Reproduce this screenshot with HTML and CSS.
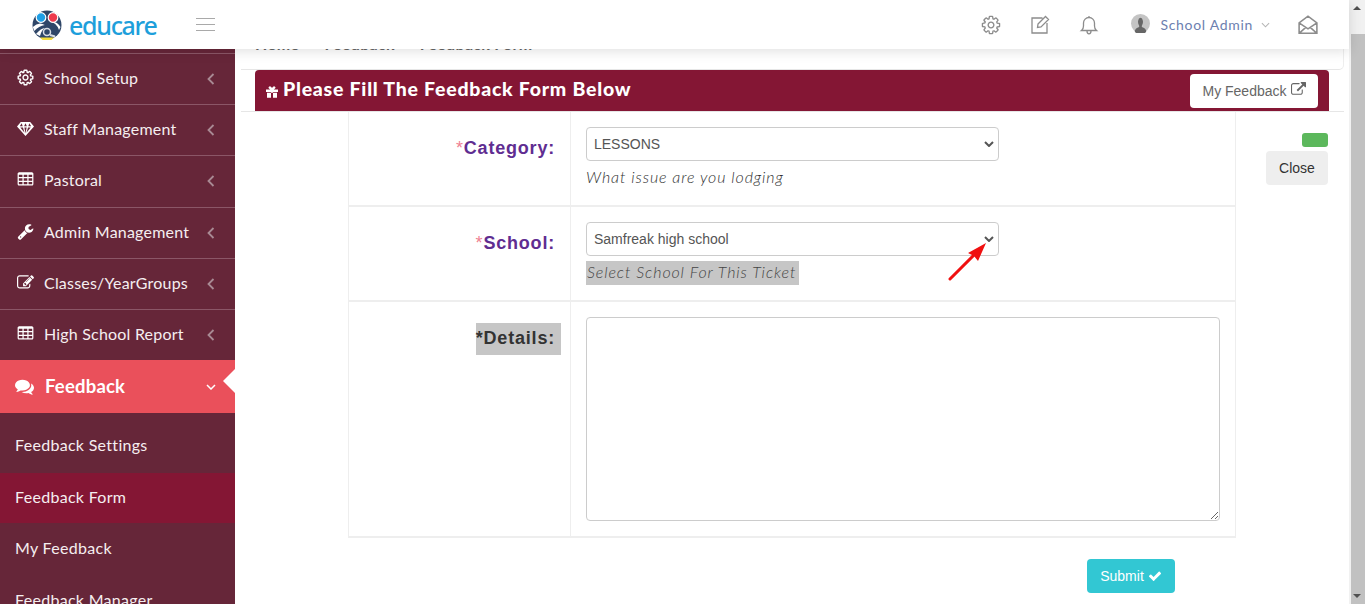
FILE: index.html
```html
<!DOCTYPE html>
<html lang="en">
<head>
    <meta charset="UTF-8">
    <title>Feedback Form</title>
    <link rel="stylesheet" href="styles.css">
</head>
<body>
    <svg class="sprite" xmlns="http://www.w3.org/2000/svg">
        <symbol id="i-cog" viewBox="0 0 1792 1792"><path d="M1152 896q0-106-75-181t-181-75-181 75-75 181 75 181 181 75 181-75 75-181zm512-109v222q0 12-8 23t-20 13l-185 28q-19 54-39 91 35 50 107 138 10 12 10 25t-9 23q-27 37-99 108t-94 71q-12 0-26-9l-138-108q-44 23-91 38-16 136-29 186-7 28-36 28h-222q-14 0-24.5-8.5t-11.5-21.5l-28-184q-49-16-90-37l-141 107q-10 9-25 9-14 0-25-11-126-114-165-168-7-10-7-23 0-12 8-23 15-21 51-66.5t54-70.5q-27-50-41-99l-183-27q-13-2-21-12.5t-8-23.5v-222q0-12 8-23t19-13l186-28q14-46 39-92-40-57-107-138-10-12-10-24 0-10 9-23 26-36 98.5-107.5t94.5-71.5q13 0 26 10l138 107q44-23 91-38 16-136 29-186 7-28 36-28h222q14 0 24.5 8.5t11.5 21.5l28 184q49 16 90 37l142-107q9-9 24-9 13 0 25 10 129 119 165 170 7 8 7 22 0 12-8 23-15 21-51 66.5t-54 70.5q26 50 41 98l183 28q13 2 21 12.5t8 23.5z"/></symbol>
        <symbol id="i-table" viewBox="0 0 1792 1792"><path d="M576 1376v-192q0-14-9-23t-23-9h-320q-14 0-23 9t-9 23v192q0 14 9 23t23 9h320q14 0 23-9t9-23zm0-384v-192q0-14-9-23t-23-9h-320q-14 0-23 9t-9 23v192q0 14 9 23t23 9h320q14 0 23-9t9-23zm512 384v-192q0-14-9-23t-23-9h-320q-14 0-23 9t-9 23v192q0 14 9 23t23 9h320q14 0 23-9t9-23zm-512-768v-192q0-14-9-23t-23-9h-320q-14 0-23 9t-9 23v192q0 14 9 23t23 9h320q14 0 23-9t9-23zm512 384v-192q0-14-9-23t-23-9h-320q-14 0-23 9t-9 23v192q0 14 9 23t23 9h320q14 0 23-9t9-23zm512 384v-192q0-14-9-23t-23-9h-320q-14 0-23 9t-9 23v192q0 14 9 23t23 9h320q14 0 23-9t9-23zm-512-768v-192q0-14-9-23t-23-9h-320q-14 0-23 9t-9 23v192q0 14 9 23t23 9h320q14 0 23-9t9-23zm512 384v-192q0-14-9-23t-23-9h-320q-14 0-23 9t-9 23v192q0 14 9 23t23 9h320q14 0 23-9t9-23zm0-384v-192q0-14-9-23t-23-9h-320q-14 0-23 9t-9 23v192q0 14 9 23t23 9h320q14 0 23-9t9-23zm128-320v1088q0 66-47 113t-113 47h-1344q-66 0-113-47t-47-113v-1088q0-66 47-113t113-47h1344q66 0 113 47t47 113z"/></symbol>
        <symbol id="i-wrench" viewBox="0 0 1792 1792"><path d="M448 1472q0-26-19-45t-45-19-45 19-19 45 19 45 45 19 45-19 19-45zm644-420l-682 682q-37 37-90 37-52 0-91-37l-106-108q-38-36-38-90 0-53 38-91l681-681q39 98 114.5 173.5t173.5 114.5zm634-435q0 39-23 106-47 134-164.5 217.5t-258.5 83.5q-185 0-316.5-131.5t-131.5-316.5 131.5-316.5 316.5-131.5q58 0 121.5 16.5t107.5 46.5q16 11 16 28t-16 28l-293 169v224l193 107q5-3 79-48.5t135.5-81 70.5-35.5q15 0 23.5 10t8.5 25z"/></symbol>
        <symbol id="i-edit" viewBox="0 0 1792 1792"><path d="M888 1184l116-116-152-152-116 116v56h96v96h56zm440-720q-16-16-33 1l-350 350q-17 17-1 33t33-1l350-350q17-17 1-33zm80 594v190q0 119-84.5 203.5t-203.5 84.5h-832q-119 0-203.5-84.5t-84.5-203.5v-832q0-119 84.5-203.5t203.5-84.5h832q63 0 117 25 15 7 18 23 3 17-9 29l-49 49q-14 14-32 8-23-6-45-6h-832q-66 0-113 47t-47 113v832q0 66 47 113t113 47h832q66 0 113-47t47-113v-126q0-13 9-22l64-64q15-15 35-7t20 29zm-96-738l288 288-672 672h-288v-288zm444 132l-92 92-288-288 92-92q28-28 68-28t68 28l152 152q28 28 28 68t-28 68z"/></symbol>
        <symbol id="i-comments" viewBox="0 0 1792 1792"><path d="M1408 768q0 139-94 257t-256.5 186.5-353.5 68.5q-86 0-176-16-124 88-278 128-36 9-86 16h-3q-11 0-20.5-8t-11.5-21q-1-3-1-6.5t.5-6.5 2-6l2.5-5 3.5-5.5 4-5 4.5-5 4-4.5q5-6 23-25t26-29.5 22.5-29 25-38.5 20.5-44q-124-72-195-177t-71-224q0-139 94-257t256.5-186.5 353.5-68.5 353.5 68.5 256.5 186.5 94 257zm384 256q0 120-71 224.5t-195 176.5q10 24 20.5 44t25 38.5 22.5 29 26 29.5 23 25q1 1 4 4.5t4.5 5 4 5 3.5 5.5l2.5 5 2 6 .5 6.5-1 6.5q-3 14-13 22t-22 7q-50-7-86-16-154-40-278-128-90 16-176 16-271 0-472-132 58 4 88 4 161 0 309-45t264-129q125-92 192-212t67-254q0-77-23-152 129 71 204 178t75 230z"/></symbol>
        <symbol id="i-external" viewBox="0 0 1792 1792"><path d="M1408 928v320q0 119-84.5 203.5t-203.5 84.5h-832q-119 0-203.5-84.5t-84.5-203.5v-832q0-119 84.5-203.5t203.5-84.5h704q14 0 23 9t9 23v64q0 14-9 23t-23 9h-704q-66 0-113 47t-47 113v832q0 66 47 113t113 47h832q66 0 113-47t47-113v-320q0-14 9-23t23-9h64q14 0 23 9t9 23zm384-864v512q0 26-19 45t-45 19-45-19l-176-176-652 652q-10 10-23 10t-23-10l-114-114q-10-10-10-23t10-23l652-652-176-176q-19-19-19-45t19-45 45-19h512q26 0 45 19t19 45z"/></symbol>
        <symbol id="i-check" viewBox="0 0 1792 1792"><path d="M1671 566q0 40-28 68l-724 724-136 136q-28 28-68 28t-68-28l-136-136-362-362q-28-28-28-68t28-68l136-136q28-28 68-28t68 28l294 295 656-657q28-28 68-28t68 28l136 136q28 28 28 68z"/></symbol>
        <symbol id="i-left" viewBox="0 0 10 14"><path d="M7.5 2 2.5 7l5 5"/></symbol>
    </svg>

    <div class="page">
        <div class="main">
            <header class="topbar">
                <div class="brand">
                    <svg class="brand-mark" viewBox="0 0 30 30">
                        <circle cx="15" cy="15" r="14.5" fill="#2f4668"/>
                        <path d="M8 27.500h14l-2.500 2.500h-9z" fill="#f4dc3a"/>
                        <path d="M.8 17q6-6 12-2-6 1-10.500 6zM4 24q5-6 9-6-3.500 2-5 8zM18 12q6 0 9 8l1.500-3Q25 11 18 12z" fill="#fff"/>
                        <circle cx="9" cy="7.500" r="4.800" fill="#1e9fe6" stroke="#fff" stroke-width="1.200"/>
                        <circle cx="21" cy="7.500" r="4.800" fill="#ee3a4d" stroke="#fff" stroke-width="1.200"/>
                        <circle cx="15" cy="22" r="3.500" fill="none" stroke="#d8dde4" stroke-width="1.500"/>
                        <path d="M18 25l5 1.500" stroke="#d8dde4" stroke-width="2"/>
                    </svg>
                    <span class="brand-name">educare</span>
                </div>
                <div class="burger"><span></span><span></span><span></span></div>
                <nav class="top-icons">
                    <svg class="top-icon outline"><use href="#i-cog"/></svg>
                    <svg class="top-icon edit-icon" viewBox="0 0 20 20"><path d="M12.500 3H2v15h15V8M8 9 15.500 1.500l3 3L11 12l-3.500.5z"/></svg>
                    <svg class="top-icon bell" viewBox="0 0 18 20"><path d="M1.500 15.500q2-1.500 2-4.500V8a5.500 5.500 0 0 1 11 0v3q0 3 2 4.500zM7 16q0 2.800 2 2.800t2-2.800M9 2.500V1"/></svg>
                    <div class="user">
                        <svg class="avatar" viewBox="0 0 20 20">
                            <circle cx="10" cy="10" r="10" fill="#c4c4c4"/>
                            <path d="M4 19q0-4 4-5 1-.5.500-2-1.500-2-1-5 .5-3 2.500-3t2.500 3q.5 3-1 5-.5 1.500.5 2 4 1 4 5a10 10 0 0 1-12 0z" fill="#666"/>
                        </svg>
                        <span class="user-name">School Admin</span>
                        <svg class="user-caret" viewBox="0 0 10 6"><path d="M1 1l4 4 4-4"/></svg>
                    </div>
                    <svg class="top-icon mail" viewBox="1 0 18 18"><path d="M2 7 10 1l8 6v9.500H2zM2 7l8 5.500L18 7M2 16.500l6-5.300M18 16.500l-6-5.300"/></svg>
                </nav>
            </header>

            <div class="workspace">
                <aside class="sidebar">
                    <a class="nav-item"><svg class="nav-icon outline"><use href="#i-cog"/></svg><span class="nav-label">School Setup</span><svg class="nav-arrow"><use href="#i-left"/></svg></a>
                    <a class="nav-item">
                        <svg class="nav-icon" viewBox="0 0 18 16"><path d="M4 1h10l4 5-9 10L0 6zM5 2.500 3 5.500h3zM9 2.500 7.500 5.500h3zM13 2.500 12 5.500h3zM3.500 7 8 12.500 6.300 7zM7.800 7 9 13l1.200-6zM11.700 7 10 12.500 14.500 7z" fill-rule="evenodd"/></svg>
                        <span class="nav-label">Staff Management</span><svg class="nav-arrow"><use href="#i-left"/></svg>
                    </a>
                    <a class="nav-item"><svg class="nav-icon"><use href="#i-table"/></svg><span class="nav-label">Pastoral</span><svg class="nav-arrow"><use href="#i-left"/></svg></a>
                    <a class="nav-item"><svg class="nav-icon"><use href="#i-wrench"/></svg><span class="nav-label">Admin Management</span><svg class="nav-arrow"><use href="#i-left"/></svg></a>
                    <a class="nav-item"><svg class="nav-icon"><use href="#i-edit"/></svg><span class="nav-label">Classes/YearGroups</span><svg class="nav-arrow"><use href="#i-left"/></svg></a>
                    <a class="nav-item"><svg class="nav-icon"><use href="#i-table"/></svg><span class="nav-label">High School Report</span><svg class="nav-arrow"><use href="#i-left"/></svg></a>
                    <a class="nav-item nav-active">
                        <svg class="nav-icon"><use href="#i-comments"/></svg>
                        <span class="nav-label">Feedback</span>
                        <svg class="nav-down" viewBox="0 0 10 6"><path d="M1 1l4 4 4-4"/></svg>
                    </a>
                    <a class="sub-item sub-first">Feedback Settings</a>
                    <a class="sub-item sub-current">Feedback Form</a>
                    <a class="sub-item sub-plain">My Feedback</a>
                    <a class="sub-item">Feedback Manager</a>
                </aside>

                <main class="content">
                    <div class="crumbs"><span>Home</span><span>Feedback</span><span>Feedback Form</span></div>
                    <div class="panel-head">
                        <h2>
                            <svg class="gift" viewBox="0 0 12 12"><path d="M0 3.500h4.200L3 2.500Q2 1.500 3 .7t2.200.3L6 2l.8-1Q8 -.1 9 .7t0 1.800l-1.200 1H12v2.500H0zM1 6.700h4v5H1zM7 6.700h4v5H7zM5 3.500h2V6.700H5z"/></svg>
                            Please Fill The Feedback Form Below
                        </h2>
                        <a class="my-feedback">My Feedback <svg class="ext-icon"><use href="#i-external"/></svg></a>
                    </div>

                    <div class="form-area">
                        <form class="feedback-form">
                            <div class="form-row row-category">
                                <div class="label-cell"><label class="field-label"><span class="star">*</span>Category:</label></div>
                                <div class="input-cell">
                                    <select class="field"><option>LESSONS</option></select>
                                    <p class="help">What issue are you lodging</p>
                                </div>
                            </div>
                            <div class="form-row row-school">
                                <div class="label-cell"><label class="field-label"><span class="star">*</span>School:</label></div>
                                <div class="input-cell">
                                    <select class="field"><option>Samfreak high school</option></select>
                                    <p class="help help-marked"><span>Select School For This Ticket</span></p>
                                    <svg class="arrow-note" viewBox="0 0 40 40"><path d="M2 38 31 9" stroke="#f01010" stroke-width="3" stroke-linecap="round"/><path d="M38 2 30 20 26 15 20 12z" fill="#f01010"/></svg>
                                </div>
                            </div>
                            <div class="form-row row-details">
                                <div class="label-cell"><label class="field-label label-marked">*Details:</label></div>
                                <div class="input-cell"><textarea class="details-box"></textarea></div>
                            </div>
                            <div class="form-actions">
                                <button type="button" class="submit">Submit <svg class="check"><use href="#i-check"/></svg></button>
                            </div>
                        </form>
                        <div class="side-actions">
                            <span class="green-chip"></span>
                            <button type="button" class="close">Close</button>
                        </div>
                    </div>
                </main>
            </div>
        </div>
        <div class="scrollbar">
            <div class="scroll-up"></div>
            <div class="scroll-thumb"></div>
            <div class="scroll-down"></div>
        </div>
    </div>
</body>
</html>
```
FILE: styles.css
```css
* {
    box-sizing: border-box;
}
html, body {
    margin: 0;
    height: 604px;
    overflow: hidden;
}
body {
    font-family: "Lato", "Liberation Sans", sans-serif;
    background: #fff;
    color: #333;
}
.sprite {
    display: none;
}
.page {
    display: flex;
    height: 604px;
}
.main {
    flex: 1;
    min-width: 0;
    position: relative;
}

/* top bar */
.topbar {
    position: absolute;
    top: 0;
    left: 0;
    right: 0;
    height: 49px;
    background: #fff;
    box-shadow: 0 2px 12px rgba(0,0,0,0.13);
    z-index: 5;
    display: flex;
    align-items: center;
}
.brand {
    width: 196px;
    padding-left: 32px;
    display: flex;
    align-items: center;
    gap: 7px;
    margin-top: 3px;
    margin-bottom: 3px;
}
.brand-mark {
    width: 30px;
    height: 30px;
    flex: none;
}
.brand-name {
    font-family: "Noto Sans", sans-serif;
    font-size: 25px;
    font-weight: 500;
    line-height: 30px;
    letter-spacing: -1.3px;
    color: #1e9fdb;
}
.burger {
    width: 19px;
    display: flex;
    flex-direction: column;
    gap: 5px;
}
.burger span {
    height: 1px;
    background: #a9a9a9;
}
.top-icons {
    margin-left: auto;
    display: flex;
    align-items: center;
    padding-right: 31px;
    padding-left: 1px;
}
.top-icon {
    width: 20px;
    height: 20px;
    fill: #8c8c8c;
}
.outline {
    fill: none;
    stroke: #8c8c8c;
    stroke-width: 120px;
}
.edit-icon {
    margin-left: 29px;
    fill: none;
    stroke: #8c8c8c;
    stroke-width: 1.3;
}
.bell {
    margin-left: 29px;
    fill: none;
    stroke: #8c8c8c;
    stroke-width: 1.3;
}
.user {
    display: flex;
    align-items: center;
    margin-left: 32px;
}
.avatar {
    width: 19px;
    height: 19px;
    margin-top: -2px;
}
.user-name {
    margin-left: 10px;
    font-size: 14px;
    letter-spacing: 0.7px;
    color: #6c80b0;
    margin-top: -1px;
}
.user-caret {
    width: 9px;
    height: 6px;
    margin-left: 8px;
    fill: none;
    stroke: #b5b5b5;
    stroke-width: 1.2;
}
.mail {
    margin-left: 28px;
    fill: none;
    stroke: #8c8c8c;
    stroke-width: 1.4;
}

/* sidebar */
.workspace {
    display: flex;
    height: 604px;
}
.sidebar {
    width: 235px;
    flex: none;
    background: #662639;
    padding-top: 52.8px;
    overflow: hidden;
    color: #fff;
}
.nav-item {
    display: flex;
    align-items: center;
    height: 51.25px;
    padding-left: 17px;
    border-top: 1px solid #8b5667;
    font-size: 16px;
    letter-spacing: 0.2px;
    color: #f5eef0;
}
.nav-icon {
    width: 17px;
    height: 17px;
    fill: #fff;
    flex: none;
    margin-right: 10px;
    margin-top: -3px;
}
.nav-icon.outline {
    stroke: #fff;
    stroke-width: 150px;
    fill: none;
}
.nav-label {
    flex: 1;
    margin-top: -3px;
}
.nav-arrow {
    width: 10px;
    height: 14px;
    margin-right: 19px;
    fill: none;
    stroke: #a98a94;
    stroke-width: 1.800;
}
.nav-active {
    height: 53px;
    border-top: 0;
    background: #ea505b;
    padding-left: 15px;
    font-size: 18.5px;
    font-weight: 700;
    color: #fff;
    position: relative;
}
.nav-active .nav-icon {
    width: 19px;
    height: 19px;
    margin-right: 11px;
    margin-top: -1px;
}
.nav-active .nav-label {
    margin-top: -1px;
}
.nav-active::after {
    content: "";
    position: absolute;
    right: 0;
    top: 9px;
    border: 12px solid transparent;
    border-right-color: #fff;
    border-left-width: 0;
}
.nav-down {
    width: 10px;
    height: 6px;
    margin-right: 19px;
    fill: none;
    stroke: #fff;
    stroke-width: 1.500;
}
.sub-item {
    display: flex;
    align-items: center;
    height: 51px;
    padding-left: 15px;
    font-size: 16px;
    letter-spacing: 0.3px;
    color: #f5eef0;
}
.sub-first {
    height: 59.7px;
    padding-top: 2px;
}
.sub-current {
    height: 50px;
    padding-bottom: 3px;
    background: #841634;
}
.sub-plain {
    padding-bottom: 1px;
}

/* content */
.content {
    flex: 1;
    min-width: 0;
    padding-top: 32px;
}
.crumbs {
    display: flex;
    gap: 25px;
    height: 38px;
    margin-left: 6px;
    margin-right: 5px;
    padding-left: 14px;
    padding-top: 2px;
    font-size: 16px;
    font-weight: 700;
    letter-spacing: 0.3px;
    color: #666;
    border-bottom: 1px solid #e6e6e6;
    border-right: 1px solid #eee;
    border-radius: 0 0 5px 0;
}
.panel-head {
    display: flex;
    align-items: center;
    justify-content: space-between;
    height: 41px;
    margin-left: 20px;
    margin-right: 20px;
    padding: 0 11px;
    background: #841634;
    border-radius: 4px 4px 0 0;
}
.panel-head h2 {
    margin: -4px 0 0;
    font-size: 19.5px;
    font-weight: 900;
    letter-spacing: 0.75px;
    color: #fff;
    display: flex;
    align-items: center;
    gap: 5px;
}
.gift {
    width: 12px;
    height: 12px;
    fill: #fff;
    margin-top: 6px;
}
.my-feedback {
    background: #fff;
    border-radius: 4px;
    height: 34px;
    width: 128px;
    display: flex;
    align-items: center;
    justify-content: center;
    gap: 4px;
    font-family: "Liberation Sans", sans-serif;
    font-size: 14px;
    color: #666;
}
.ext-icon {
    width: 15px;
    height: 15px;
    fill: #666;
    margin-top: -3px;
}
.form-area {
    display: flex;
    margin-left: 6px;
    margin-right: 5px;
    border-top: 1px solid #e6e6e6;
    padding-left: 107px;
}
.feedback-form {
    width: 888px;
    flex: none;
}
.form-row {
    display: grid;
    grid-template-columns: 222px 1fr;
    border-left: 1px solid #eee;
    border-right: 1px solid #eee;
    border-bottom: 2px solid #eee;
}
.row-category, .row-school {
    height: 95px;
}
.row-details {
    height: 236px;
}
.label-cell {
    border-right: 1px solid #eee;
    text-align: right;
    padding-right: 15px;
    padding-top: 26px;
}
.field-label {
    font-family: "Liberation Sans", sans-serif;
    font-size: 18px;
    font-weight: 700;
    letter-spacing: 0.8px;
    color: #5f2d91;
}
.star {
    color: #ef7f92;
    font-weight: 400;
}
.label-marked {
    display: inline-block;
    height: 32px;
    line-height: 31px;
    margin-top: -6px;
    margin-right: -6px;
    padding-right: 6px;
    background: #c6c6c6;
    color: #333;
}
.input-cell {
    padding: 15px 15px 0;
    position: relative;
}
.field {
    display: block;
    width: 413px;
    height: 34px;
    padding: 0 24px 0 7px;
    border: 1px solid #ccc;
    border-radius: 4px;
    appearance: none;
    background: #fff url("data:image/svg+xml,%3Csvg xmlns='http://www.w3.org/2000/svg' width='10' height='6'%3E%3Cpath d='M1 1l4 4 4-4' fill='none' stroke='%23555' stroke-width='2'/%3E%3C/svg%3E") no-repeat right 4px center;
    font-family: "Liberation Sans", sans-serif;
    font-size: 14px;
    color: #555;
}
.help {
    margin: 5px 0 0;
    height: 24px;
    line-height: 22px;
    font-size: 16px;
    font-weight: 300;
    font-style: italic;
    letter-spacing: 0.9px;
    color: #333;
}
.help-marked span {
    display: inline-block;
    height: 24px;
    padding: 0 3px 0 1px;
    background: #c6c6c6;
    color: #444;
}
.arrow-note {
    position: absolute;
    left: 377px;
    top: 34px;
    width: 40px;
    height: 40px;
    fill: none;
}
.details-box {
    display: block;
    width: 634px;
    height: 204px;
    border: 1px solid #ccc;
    border-radius: 4px;
    background: #fff;
}
.form-actions {
    padding-top: 21px;
    padding-left: 739px;
}
.submit {
    width: 88px;
    height: 34px;
    border: 0;
    border-radius: 4px;
    background: #32c7d3;
    color: #fff;
    font-family: "Liberation Sans", sans-serif;
    font-size: 14px;
    display: flex;
    align-items: center;
    justify-content: center;
    gap: 4px;
    padding: 0;
}
.check {
    width: 14px;
    height: 14px;
    fill: #fff;
}
.side-actions {
    width: 92px;
    padding-top: 21px;
    padding-left: 30px;
    display: flex;
    flex-direction: column;
    align-items: flex-end;
}
.green-chip {
    width: 26px;
    height: 14px;
    background: #5cb85c;
    border-radius: 3px;
}
.close {
    margin-top: 4px;
    width: 62px;
    height: 34px;
    border: 0;
    border-radius: 4px;
    background: #eee;
    color: #333;
    font-family: "Liberation Sans", sans-serif;
    font-size: 14px;
    padding: 0;
}

/* scrollbar */
.scrollbar {
    width: 16px;
    flex: none;
    background: #f1f1f1;
    display: flex;
    flex-direction: column;
    align-items: center;
    position: relative;
}
.scroll-up {
    margin-top: 6px;
    border: 4px solid transparent;
    border-top: 0;
    border-bottom: 4px solid #505050;
}
.scroll-thumb {
    position: absolute;
    top: 34px;
    left: 2px;
    right: 0;
    height: 570px;
    background: #c1c1c1;
}
.scroll-down {
    position: absolute;
    bottom: 6px;
    left: 4px;
    border: 4px solid transparent;
    border-bottom: 0;
    border-top: 4px solid #505050;
}
```
